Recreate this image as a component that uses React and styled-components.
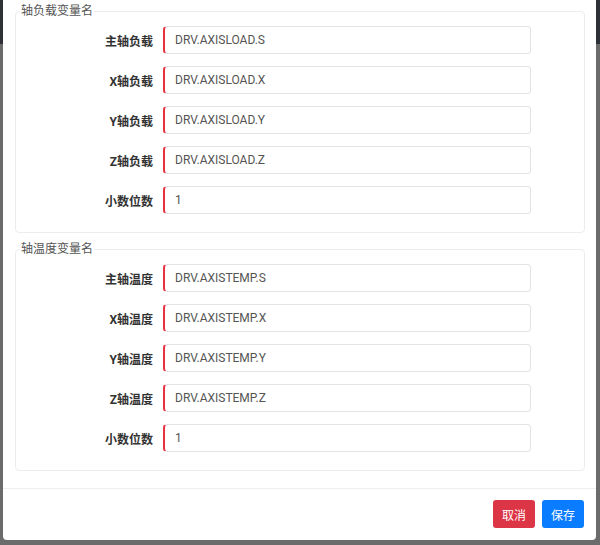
import React from 'react';
import styled, { createGlobalStyle } from 'styled-components';

const GlobalStyle = createGlobalStyle`
  html, body {
    margin: 0;
    padding: 0;
  }
  body {
    font-family: Roboto, "Noto Sans CJK SC", sans-serif;
    background: #6a6a6a;
  }
`;

const Backdrop = styled.div`
  width: 600px;
  height: 545px;
  box-sizing: border-box;
  padding: 0 4px 5px 3px;
  background: linear-gradient(to bottom, #2e3236 0px, #2e3236 44px, #6b6b6b 44px, #6b6b6b 100%);
`;

const Modal = styled.div`
  height: 100%;
  background: #fff;
  border-radius: 0 0 4px 4px;
  display: flex;
  flex-direction: column;
`;

const Body = styled.div`
  flex: 1;
  padding: 4px 11px 0 12px;
  display: flex;
  flex-direction: column;
  gap: 9px;
`;

const Fieldset = styled.fieldset`
  margin: 0;
  padding: 8px 53px 18px 0;
  border: 1px solid #ececec;
  border-radius: 4px;
  display: flex;
  flex-direction: column;
  gap: 12px;
`;

const Legend = styled.legend`
  padding: 0 1px;
  margin-left: 4px;
  font-size: 12px;
  line-height: 14px;
  color: #555;
`;

const Row = styled.div`
  display: grid;
  grid-template-columns: 137px 1fr;
  column-gap: 10px;
  align-items: center;
`;

const Label = styled.label`
  text-align: right;
  font-size: 12px;
  font-weight: bold;
  color: #333;
`;

const Input = styled.input`
  box-sizing: border-box;
  height: 28px;
  width: 100%;
  padding: 0 10px;
  border: 1px solid #e3e3e3;
  border-left: 2px solid #e8333f;
  border-radius: 4px;
  font-family: Roboto, "Noto Sans CJK SC", sans-serif;
  font-size: 12px;
  color: #555;
  outline: none;
`;

const Footer = styled.div`
  border-top: 1px solid #eeeeee;
  padding: 11px 12px 12px;
  display: flex;
  justify-content: flex-end;
  gap: 7px;
`;

const Button = styled.button`
  height: 28px;
  width: 42px;
  border: none;
  border-radius: 3px;
  font-family: "Noto Sans CJK SC", sans-serif;
  font-size: 12px;
  color: #fff;
  background: ${(p) => (p.$variant === 'danger' ? '#dc3545' : '#0a7cff')};
  cursor: pointer;
`;

const groups = [
  {
    title: '轴负载变量名',
    rows: [
      ['主轴负载', 'DRV.AXISLOAD.S'],
      ['X轴负载', 'DRV.AXISLOAD.X'],
      ['Y轴负载', 'DRV.AXISLOAD.Y'],
      ['Z轴负载', 'DRV.AXISLOAD.Z'],
      ['小数位数', '1'],
    ],
  },
  {
    title: '轴温度变量名',
    rows: [
      ['主轴温度', 'DRV.AXISTEMP.S'],
      ['X轴温度', 'DRV.AXISTEMP.X'],
      ['Y轴温度', 'DRV.AXISTEMP.Y'],
      ['Z轴温度', 'DRV.AXISTEMP.Z'],
      ['小数位数', '1'],
    ],
  },
];

const App = () => {
  return (
    <>
      <GlobalStyle />
      <Backdrop>
        <Modal>
          <Body>
            {groups.map((g) => (
              <Fieldset key={g.title}>
                <Legend>{g.title}</Legend>
                {g.rows.map(([label, value], i) => (
                  <Row key={i}>
                    <Label>{label}</Label>
                    <Input defaultValue={value} />
                  </Row>
                ))}
              </Fieldset>
            ))}
          </Body>
          <Footer>
            <Button $variant="danger">取消</Button>
            <Button $variant="primary">保存</Button>
          </Footer>
        </Modal>
      </Backdrop>
    </>
  );
};

export default App;
